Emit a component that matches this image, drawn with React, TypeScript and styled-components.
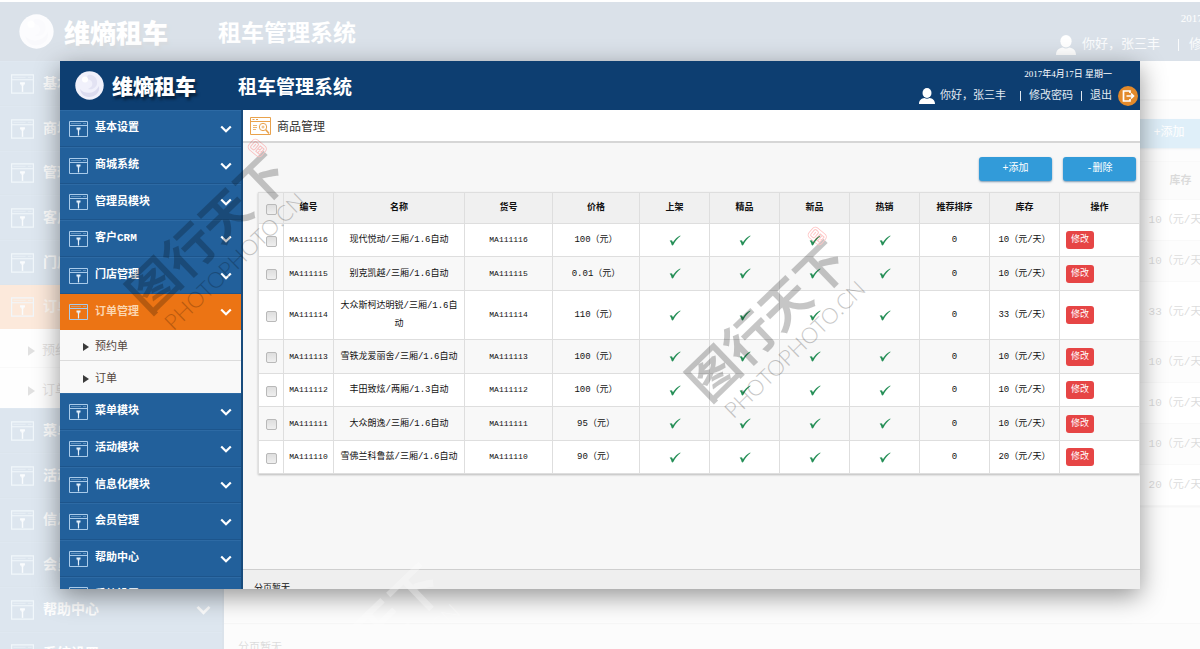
import React from "react";
import styled, { createGlobalStyle, ThemeProvider } from "styled-components";

type Sized = { theme: { large?: boolean } };

/* Picks a pixel value for the window (compact) or the backdrop (large). */
const px = (compact: number, large: number) => ({ theme }: Sized) =>
  `${theme.large ? large : compact}px`;

const Global = createGlobalStyle`
  *, *::before, *::after { box-sizing: border-box; }
  body {
    margin: 0;
    background: #fff;
    font-family: "Liberation Mono", "Noto Sans CJK SC", monospace;
  }
  button, input { font: inherit; margin: 0; padding: 0; }
  a { color: inherit; text-decoration: none; }
  ul { list-style: none; margin: 0; padding: 0; }
`;

const Stage = styled.div`
  position: relative;
  display: grid;
  min-height: 100vh;
  padding: 61px 60px 60px;
  overflow: hidden;
`;

const Backdrop = styled.div`
  position: absolute;
  inset: 2px -122px 0 0;
  display: grid;
  opacity: 0.15;
`;

const Window = styled.div`
  position: relative;
  display: grid;
  min-width: 0;
  box-shadow: 0 7px 24px rgba(0, 0, 0, 0.42);
`;

const Shell = styled.div`
  display: flex;
  flex-direction: column;
  min-width: 0;
  overflow: hidden;
  background: #f7f7f7;
  font-size: ${px(9, 11)};
  color: #111;
`;

const TopBar = styled.header`
  display: flex;
  flex: none;
  align-items: center;
  height: ${px(49, 59)};
  padding: 0 ${px(2, 2)} 0 ${px(15, 19)};
  background: #0d3e71;
  color: #fff;
`;

const Brand = styled.div`
  display: flex;
  align-items: center;
  gap: ${px(8, 10)};
  width: ${px(163, 199)};
  font-family: "Noto Sans CJK SC", sans-serif;
  font-size: ${px(21, 26)};
  font-weight: 900;
  line-height: 1;
  text-shadow: 2px 3px 3px rgba(0, 0, 0, 0.5);
  svg {
    width: ${px(29, 35)};
    height: ${px(29, 35)};
  }
`;

const SystemTitle = styled.h1`
  flex: 1;
  margin: 0;
  font-family: "Noto Sans CJK SC", sans-serif;
  font-size: ${px(19, 23)};
  font-weight: 700;
  line-height: 1;
`;

const Account = styled.div`
  display: flex;
  flex-direction: column;
  gap: ${px(6, 7)};
  align-items: flex-end;
  padding-top: ${px(3, 4)};
`;

const Today = styled.time`
  padding-right: ${px(26, 32)};
  font-family: "Liberation Serif", "Noto Sans CJK SC", serif;
  font-size: ${px(9, 11)};
  line-height: ${px(12, 15)};
`;

const AccountRow = styled.div`
  display: flex;
  align-items: center;
  gap: ${px(8, 10)};
  font-size: ${px(11, 13)};
  line-height: ${px(20, 24)};
  color: #e3eaf2;
`;

const Greeting = styled.span`
  display: flex;
  align-items: center;
  gap: ${px(5, 6)};
  padding-right: ${px(6, 8)};
  svg {
    width: ${px(16, 20)};
    height: ${px(16, 20)};
  }
`;

const Divider = styled.span`
  width: 1px;
  height: ${px(10, 12)};
  background: #dfe7ef;
`;

const Exit = styled.a`
  display: flex;
  align-items: center;
  gap: ${px(6, 8)};
  svg {
    width: ${px(20, 24)};
    height: ${px(20, 24)};
  }
`;

const Body = styled.div`
  display: flex;
  flex: 1 1 0;
  min-height: 0;
`;

const Sidebar = styled.nav`
  flex: none;
  width: ${px(183, 224)};
  overflow: hidden;
  background: #22609b;
  border-right: 2px solid #184b7c;
`;

const MenuItem = styled.li`
  > button {
    height: ${px(37, 45)};
  }
  &:nth-child(3n) > button {
    height: ${px(36, 44)};
  }
`;

const MenuButton = styled.button<{ $active?: boolean }>`
  display: flex;
  align-items: center;
  gap: ${px(7, 9)};
  width: 100%;
  padding: 0 ${px(9, 11)};
  border: 0;
  border-top: 1px solid ${(p) => (p.$active ? "#ec7414" : "#2d6aa4")};
  border-bottom: 1px solid ${(p) => (p.$active ? "#ec7414" : "#1d558c")};
  background: ${(p) => (p.$active ? "#ec7414" : "#22609b")};
  color: ${(p) => (p.$active ? "#fbd6b0" : "#fff")};
  font-size: ${px(11, 14)};
  font-weight: 700;
  line-height: 1;
  text-align: left;
  span {
    flex: 1;
  }
  .card {
    width: ${px(19, 23)};
    height: ${px(16, 20)};
  }
  .chevron {
    width: ${px(12, 15)};
    height: ${px(8, 10)};
  }
`;

const SubMenu = styled.ul`
  background: #f9f9f9;
  color: #54463e;
  font-size: ${px(11, 13)};
`;

const SubItem = styled.li`
  border-bottom: 1px solid #dcdcdc;
  a {
    display: flex;
    align-items: center;
    gap: ${px(6, 7)};
    height: ${px(30, 38)};
    padding-left: ${px(23, 28)};
  }
  &:last-child {
    border-bottom: 0;
  }
  &:last-child a {
    height: ${px(32, 40)};
  }
  svg {
    width: ${px(6, 7)};
    height: ${px(8, 10)};
    margin-top: ${px(4, 5)};
  }
`;

const Main = styled.main`
  display: flex;
  flex: 1;
  flex-direction: column;
  min-width: 0;
`;

const PageHeading = styled.div`
  display: flex;
  flex: none;
  align-items: center;
  gap: ${px(6, 7)};
  height: ${px(33, 40)};
  padding-left: ${px(7, 9)};
  background: #fff;
  border-bottom: 2px solid #d6d6d6;
  svg {
    width: ${px(21, 26)};
    height: ${px(18, 22)};
  }
  h2 {
    margin: 0;
    font-size: ${px(12, 15)};
    font-weight: 400;
    color: #333;
  }
`;

const Toolbar = styled.div`
  display: flex;
  flex: none;
  align-items: center;
  justify-content: flex-end;
  gap: ${px(11, 13)};
  height: ${px(49, 60)};
  padding: ${px(3, 4)} ${px(4, 5)} 0 0;
`;

const ToolButton = styled.button`
  width: ${px(73, 90)};
  height: ${px(24, 29)};
  border: 0;
  border-radius: 3px;
  background: #329bd9;
  box-shadow: 0 1px 2px rgba(0, 60, 110, 0.5);
  color: #fff;
  font-size: ${px(10, 12)};
  line-height: ${px(24, 29)};
`;

const TableArea = styled.div`
  flex: 1;
  min-height: 0;
  padding: 0 0 0 ${px(15, 18)};
`;

const Table = styled.table`
  width: 100%;
  table-layout: fixed;
  border-collapse: collapse;
  border: 1px solid #c9c9c9;
  box-shadow: 0 1px 2px rgba(0, 0, 0, 0.25);
  line-height: ${px(18, 22)};
  text-align: center;
  th,
  td {
    padding: 0 ${px(4, 5)};
    border: 1px solid #dedede;
  }
  th {
    height: ${px(31, 38)};
    background: #f0f0f0;
    border-left-color: #e2e2e2;
    font-weight: 700;
  }
  tbody tr {
    height: ${px(33, 41)};
    background: #fff;
  }
  tbody tr:nth-child(even) {
    height: ${px(34, 41)};
    background: #f8f8f8;
  }
  tbody tr:nth-child(3) {
    height: ${px(49, 60)};
  }
  td:last-child {
    padding-left: ${px(6, 8)};
    text-align: left;
  }
`;

const Col = styled.col<{ $w: [number, number] }>`
  width: ${(p) => px(p.$w[0], p.$w[1])(p as unknown as Sized)};
`;

const Tick = styled.input`
  display: block;
  width: ${px(11, 13)};
  height: ${px(11, 13)};
  margin: ${px(2, 3)} auto 0;
  appearance: none;
  border: 1px solid #b9b9b9;
  border-radius: 2px;
  background: linear-gradient(#dedede, #efefef);
`;

const Code = styled.td`
  font-size: ${px(8, 10)};
`;

const Flag = styled.td`
  svg {
    display: block;
    width: ${px(12, 15)};
    height: ${px(11, 13)};
    margin: 0 auto;
  }
`;

const EditButton = styled.button`
  display: block;
  width: ${px(28, 34)};
  height: ${px(18, 22)};
  border: 0;
  border-radius: 3px;
  background: #e64545;
  color: #fff;
  font-size: ${px(9, 11)};
  line-height: ${px(18, 22)};
`;

const Pager = styled.footer`
  flex: none;
  height: ${px(20, 26)};
  padding: ${px(13, 17)} 0 0 ${px(11, 14)};
  overflow: hidden;
  border-top: 1px solid #cfcfcf;
  background: #efefef;
  line-height: ${px(12, 15)};
`;

const Mark = styled.div<{ $x: number; $y: number; $light?: boolean }>`
  position: absolute;
  left: ${(p) => p.$x}px;
  top: ${(p) => p.$y}px;
  width: 216px;
  transform: translate(-50%, -50%) rotate(-44deg);
  color: ${(p) => (p.$light ? "#fff" : "#000")};
  opacity: ${(p) => (p.$light ? 0.3 : 0.22)};
  font-family: Lato, "Noto Sans CJK SC", sans-serif;
  text-align: center;
  white-space: nowrap;
  pointer-events: none;
  svg {
    position: absolute;
    right: 4px;
    top: -6px;
  }
`;

const MarkBrush = styled.div`
  font-size: 50px;
  font-weight: 700;
  line-height: 54px;
`;

const MarkLatin = styled.div`
  font-size: 22px;
  font-weight: 300;
  line-height: 26px;
`;

const Globe = () => (
  <svg viewBox="0 0 29 29" aria-hidden="true">
    <circle cx="14.5" cy="14.5" r="14.2" fill="#f1f1fb" />
    <path d="M5 18c5 6 15 5 19-3 1 7-4 11-10 11-5 0-8-3-9-8z" fill="#dcdcef" />
    <path d="M13 4c6-1 10 4 9 9-1 4-5 6-9 5 4-2 5-4 4-7-1-2-3-3-6-3z" fill="#e3e3f3" />
    <circle cx="10" cy="8.500" r="3" fill="#fff" />
  </svg>
);

const Person = () => (
  <svg viewBox="0 0 16 16" fill="#fff" aria-hidden="true">
    <ellipse cx="8" cy="5" rx="4.500" ry="5" />
    <path d="M0 16c0-4 2.500-5.500 5.500-6 1.500 1 3.500 1 5 0 3 .5 5.500 2 5.500 6z" />
  </svg>
);

const ExitIcon = () => (
  <svg viewBox="0 0 20 20" fill="none" aria-hidden="true">
    <circle cx="10" cy="10" r="10" fill="#e38a2b" />
    <path d="M12 7V5H5.500v10H12v-2M8.500 10H15M13 7.500l2.500 2.500-2.500 2.500" stroke="#fff" strokeWidth="1.700" />
  </svg>
);

const CardIcon = () => (
  <svg className="card" viewBox="0 0 19 16" fill="none" stroke="#a9cbea" aria-hidden="true">
    <path d="M.5.5h18v15H.5zM.5 4.500h18" />
    <path d="M2 2.500h10M14 2.500h3" strokeWidth=".6" strokeOpacity=".7" />
    <path d="M7.500 7.500h4M9.500 7v2.500" stroke="#e4f0fb" strokeWidth="1.800" />
    <path d="M9.500 9v5.500" stroke="#e4f0fb" strokeWidth="1.200" />
  </svg>
);

const Chevron = () => (
  <svg className="chevron" viewBox="0 0 12 8" fill="none" aria-hidden="true">
    <path d="M1.200 1.500 6 6.200l4.800-4.700" stroke="#fff" strokeWidth="2.200" />
  </svg>
);

const Arrow = () => (
  <svg viewBox="0 0 6 8" aria-hidden="true">
    <path d="M0 0l6 4-6 4z" fill="#3b3b3b" />
  </svg>
);

const GoodsIcon = () => (
  <svg viewBox="0 0 21 18" fill="none" stroke="#e9a24c" aria-hidden="true">
    <path d="M.5.5h20v17H.5zM.5 4.500h20M2.500 2.500h2M6 2.500h2" />
    <path d="M3 8.500h4M3 10.500h4M3 12.500h3" strokeWidth=".8" />
    <circle cx="13" cy="10" r="3.700" />
    <path d="M11.500 10h3M13 8.500v3" strokeWidth=".8" />
    <path d="M15.800 12.800 19 16.500" strokeWidth="1.600" />
  </svg>
);

const CheckMark = () => (
  <svg viewBox="0 0 12 11" role="img" aria-label="是">
    <path d="M.6 5.800C1.600 5 2.800 5 3.200 5.800L3.900 7.300C5.800 4.600 8.200 2 11.200.6L11.500 1C8.800 3 6.400 6 4.400 9.800 3.900 10.600 3 10.700 2.600 9.800 2.200 8.200 1.700 6.800.6 5.800z" fill="#258f57" />
  </svg>
);

const Seal = () => (
  <svg width="18" height="14" viewBox="0 0 18 14" fill="none" stroke="#f00" aria-hidden="true" style={{ rotate: "84deg" }}>
    <rect x=".5" y=".5" width="17" height="13" rx="4" />
    <rect x="3" y="3" width="5" height="8" rx="1.500" />
    <path d="M10 3.500h5v7h-5zM10 7h5M12.500 3.500v7M5.500 5v4" />
  </svg>
);

const menu = [
  "基本设置", "商城系统", "管理员模块", "客户CRM", "门店管理", "订单管理",
  "菜单模块", "活动模块", "信息化模块", "会员管理", "帮助中心", "系统设置",
];

const columns: { title: string; w?: [number, number] }[] = [
  { title: "编号", w: [50, 61] },
  { title: "名称" },
  { title: "货号", w: [88, 108] },
  { title: "价格", w: [87, 107] },
  { title: "上架", w: [70, 86] },
  { title: "精品", w: [70, 86] },
  { title: "新品", w: [70, 86] },
  { title: "热销", w: [70, 86] },
  { title: "推荐排序", w: [70, 86] },
  { title: "库存", w: [70, 86] },
  { title: "操作", w: [80, 98] },
];

const goods = [
  { id: "MA111116", name: "现代悦动/三厢/1.6自动", price: "100", stock: 10 },
  { id: "MA111115", name: "别克凯越/三厢/1.6自动", price: "0.01", stock: 10 },
  { id: "MA111114", name: "大众斯柯达明锐/三厢/1.6自动", price: "110", stock: 33 },
  { id: "MA111113", name: "雪铁龙爱丽舍/三厢/1.6自动", price: "100", stock: 10 },
  { id: "MA111112", name: "丰田致炫/两厢/1.3自动", price: "100", stock: 10 },
  { id: "MA111111", name: "大众朗逸/三厢/1.6自动", price: "95", stock: 10 },
  { id: "MA111110", name: "雪佛兰科鲁兹/三厢/1.6自动", price: "90", stock: 20 },
];

const Admin = () => (
  <Shell>
    <TopBar>
      <Brand><Globe />维熵租车</Brand>
      <SystemTitle>租车管理系统</SystemTitle>
      <Account>
        <Today dateTime="2017-04-17">2017年4月17日 星期一</Today>
        <AccountRow>
          <Greeting><Person />你好，张三丰</Greeting>
          <Divider />
          <a href="#password">修改密码</a>
          <Divider />
          <Exit href="#exit">退出<ExitIcon /></Exit>
        </AccountRow>
      </Account>
    </TopBar>
    <Body>
      <Sidebar>
        <ul>
          {menu.map((label) => {
            const active = label === "订单管理";
            return (
              <MenuItem key={label}>
                <MenuButton type="button" $active={active} aria-expanded={active}>
                  <CardIcon /><span>{label}</span><Chevron />
                </MenuButton>
                {active && (
                  <SubMenu>
                    <SubItem><a href="#booking"><Arrow />预约单</a></SubItem>
                    <SubItem><a href="#orders"><Arrow />订单</a></SubItem>
                  </SubMenu>
                )}
              </MenuItem>
            );
          })}
        </ul>
      </Sidebar>
      <Main>
        <PageHeading><GoodsIcon /><h2>商品管理</h2></PageHeading>
        <Toolbar>
          <ToolButton type="button">+添加</ToolButton>
          <ToolButton type="button">-删除</ToolButton>
        </Toolbar>
        <TableArea>
          <Table>
            <colgroup>
              <Col $w={[25, 31]} />
              {columns.map((c) => (c.w ? <Col key={c.title} $w={c.w} /> : <col key={c.title} />))}
            </colgroup>
            <thead>
              <tr>
                <th><Tick type="checkbox" aria-label="全选" /></th>
                {columns.map((c) => <th key={c.title} scope="col">{c.title}</th>)}
              </tr>
            </thead>
            <tbody>
              {goods.map((g) => (
                <tr key={g.id}>
                  <td><Tick type="checkbox" aria-label={g.id} /></td>
                  <Code>{g.id}</Code>
                  <td>{g.name}</td>
                  <Code>{g.id}</Code>
                  <td>{g.price}（元）</td>
                  <Flag><CheckMark /></Flag>
                  <Flag><CheckMark /></Flag>
                  <Flag><CheckMark /></Flag>
                  <Flag><CheckMark /></Flag>
                  <td>0</td>
                  <td>{g.stock}（元/天）</td>
                  <td><EditButton type="button">修改</EditButton></td>
                </tr>
              ))}
            </tbody>
          </Table>
        </TableArea>
        <Pager>分页暂无</Pager>
      </Main>
    </Body>
  </Shell>
);

const Watermark = ({ x, y, light }: { x: number; y: number; light?: boolean }) => (
  <Mark $x={x} $y={y} $light={light} aria-hidden="true">
    <MarkBrush>图行天下</MarkBrush>
    <MarkLatin>PHOTOPHOTO.CN</MarkLatin>
    {!light && <Seal />}
  </Mark>
);

export default function App() {
  return (
    <Stage>
      <Global />
      <ThemeProvider theme={{ large: true }}>
        <Backdrop aria-hidden="true" inert>
          <Admin />
        </Backdrop>
      </ThemeProvider>
      <ThemeProvider theme={{ large: false }}>
        <Window>
          <Admin />
        </Window>
      </ThemeProvider>
      <Watermark x={216} y={242} />
      <Watermark x={776} y={330} />
      <Watermark x={371} y={653} light />
    </Stage>
  );
}
